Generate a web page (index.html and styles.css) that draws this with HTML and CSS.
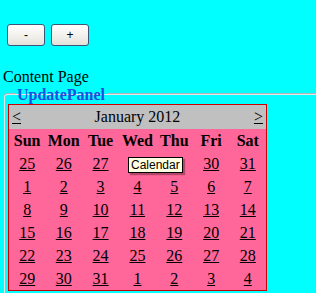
FILE: index.html
```html
<!DOCTYPE html>
<html lang="en">
<head>
  <meta charset="UTF-8">
  <title>Content Page</title>
  <link rel="stylesheet" href="styles.css">
</head>
<body>
  <div class="toolbar">
    <button class="btn" id="btnMinus">-</button>
    <button class="btn" id="btnPlus">+</button>
  </div>
  <div class="page-title">Content Page</div>
  <fieldset class="panel">
    <legend>UpdatePanel</legend>
    <table class="calendar">
      <tr class="cal-title">
        <td colspan="7">
          <div class="cal-nav">
            <a href="#">&lt;</a>
            <span>January 2012</span>
            <a href="#">&gt;</a>
          </div>
        </td>
      </tr>
      <tr class="cal-days">
        <th>Sun</th><th>Mon</th><th>Tue</th><th>Wed</th><th>Thu</th><th>Fri</th><th>Sat</th>
      </tr>
      <tr><td><a href="#">25</a></td><td><a href="#">26</a></td><td><a href="#">27</a></td><td><a href="#">28</a></td><td><a href="#">29</a></td><td><a href="#">30</a></td><td><a href="#">31</a></td></tr>
      <tr><td><a href="#">1</a></td><td><a href="#">2</a></td><td><a href="#">3</a></td><td><a href="#">4</a></td><td><a href="#">5</a></td><td><a href="#">6</a></td><td><a href="#">7</a></td></tr>
      <tr><td><a href="#">8</a></td><td><a href="#">9</a></td><td><a href="#">10</a></td><td><a href="#">11</a></td><td><a href="#">12</a></td><td><a href="#">13</a></td><td><a href="#">14</a></td></tr>
      <tr><td><a href="#">15</a></td><td><a href="#">16</a></td><td><a href="#">17</a></td><td><a href="#">18</a></td><td><a href="#">19</a></td><td><a href="#">20</a></td><td><a href="#">21</a></td></tr>
      <tr><td><a href="#">22</a></td><td><a href="#">23</a></td><td><a href="#">24</a></td><td><a href="#">25</a></td><td><a href="#">26</a></td><td><a href="#">27</a></td><td><a href="#">28</a></td></tr>
      <tr><td><a href="#">29</a></td><td><a href="#">30</a></td><td><a href="#">31</a></td><td><a href="#">1</a></td><td><a href="#">2</a></td><td><a href="#">3</a></td><td><a href="#">4</a></td></tr>
    </table>
  </fieldset>
  <div class="tooltip">Calendar</div>
</body>
</html>
```

FILE: styles.css
```css
body {
  margin: 0;
  background-color: #00ffff;
  font-family: "Liberation Serif", "Times New Roman", serif;
  font-size: 16px;
  color: #000;
  overflow: hidden;
  height: 293px;
  position: relative;
}

.toolbar {
  display: flex;
  gap: 6px;
  padding: 24px 0 0 7px;
}

.btn {
  width: 38px;
  height: 22px;
  margin: 0;
  padding: 0;
  border: 1px solid #3d5578;
  border-radius: 3px;
  background: linear-gradient(#ffffff, #f1efea 60%, #e4e1da);
  font-family: "Liberation Sans", Arial, sans-serif;
  font-size: 12px;
  color: #000;
}

.page-title {
  margin-top: 22px;
  padding-left: 3px;
}

/* group box round the calendar */
.panel {
  margin: -4px 0 0 3px;
  width: 340px;
  padding: 0 4px 20px 4px;
  border: 1px solid #b4b4b4;
  border-radius: 4px;
  box-shadow: inset 1px 1px 0 #e4e4e4;
}

.panel legend {
  margin-left: 7px;
  padding: 4px 2px 0 2px;
  color: #1a4fe0;
  font-weight: bold;
}

.calendar {
  width: 259px;
  table-layout: fixed;
  border-collapse: collapse;
  border: 1px solid #cc0000;
  background-color: #ff6699;
}

.calendar td,
.calendar th {
  padding: 0;
  height: 23px;
  text-align: center;
  vertical-align: middle;
}

.calendar a {
  color: #000;
  text-decoration: underline;
}

.cal-title td {
  height: 24px;
  background-color: #c0c0c0;
}

.cal-nav {
  display: flex;
  justify-content: space-between;
  padding: 0 3px;
}

.cal-days th {
  font-weight: bold;
}

.tooltip {
  position: absolute;
  left: 128px;
  top: 157px;
  height: 14px;
  padding: 0 2px;
  border: 1px solid #000;
  background-color: #ffffe1;
  font-family: "Liberation Sans", Arial, sans-serif;
  font-size: 12px;
  line-height: 14px;
  box-shadow: 2px 2px 1px rgba(0, 0, 0, 0.3);
}
```
